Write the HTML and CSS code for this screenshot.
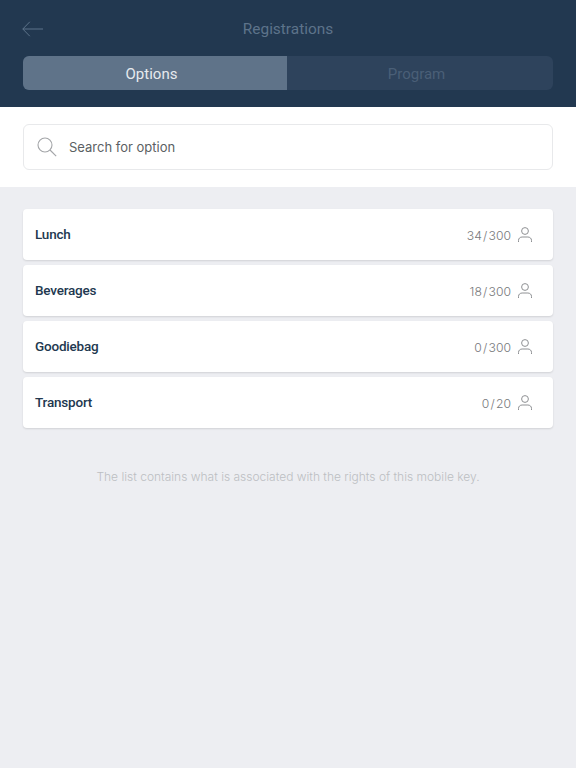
FILE: index.html
```html
<!DOCTYPE html>
<html lang="en">

<head>
    <meta charset="UTF-8">
    <meta name="viewport" content="width=device-width, initial-scale=1.0">
    <title>Registrations</title>
    <link rel="stylesheet" href="styles.css">
</head>

<body>

    <header class="topo">
        <div class="topo-linha">
            <a class="voltar" href="#" aria-label="Back">
                <svg width="22" height="16" viewBox="0 0 22 16" fill="none" stroke="#5d738a" stroke-width="1">
                    <path d="M21 8H0.8M7.8 0.8L0.8 8l7 7.2" />
                </svg>
            </a>
            <h1 class="titulo">Registrations</h1>
        </div>
        <div class="abas">
            <div class="aba aba-ativa">Options</div>
            <div class="aba">Program</div>
        </div>
    </header>

    <div class="busca">
        <div class="busca-campo">
            <svg width="20" height="20" viewBox="0 0 20 20" fill="none" stroke="#a3a5a8" stroke-width="1.1">
                <circle cx="8" cy="8" r="7" />
                <path d="M13 13l6.2 6.2" />
            </svg>
            <span>Search for option</span>
        </div>
    </div>

    <main class="lista">
        <div class="item">
            <span class="item-nome">Lunch</span>
            <span class="item-total">34 / 300</span>
            <svg class="pessoa" width="14" height="15" viewBox="0 0 14 15" fill="none" stroke="#8f9194" stroke-width="1">
                <circle cx="7" cy="4" r="3.4" />
                <path d="M0.5 15v-1.6c0-2 1.6-3.4 3.6-3.4h5.8c2 0 3.6 1.4 3.6 3.4V15" />
            </svg>
        </div>
        <div class="item">
            <span class="item-nome">Beverages</span>
            <span class="item-total">18 / 300</span>
            <svg class="pessoa" width="14" height="15" viewBox="0 0 14 15" fill="none" stroke="#8f9194" stroke-width="1">
                <circle cx="7" cy="4" r="3.4" />
                <path d="M0.5 15v-1.6c0-2 1.6-3.4 3.6-3.4h5.8c2 0 3.6 1.4 3.6 3.4V15" />
            </svg>
        </div>
        <div class="item">
            <span class="item-nome">Goodiebag</span>
            <span class="item-total">0 / 300</span>
            <svg class="pessoa" width="14" height="15" viewBox="0 0 14 15" fill="none" stroke="#8f9194" stroke-width="1">
                <circle cx="7" cy="4" r="3.4" />
                <path d="M0.5 15v-1.6c0-2 1.6-3.4 3.6-3.4h5.8c2 0 3.6 1.4 3.6 3.4V15" />
            </svg>
        </div>
        <div class="item">
            <span class="item-nome">Transport</span>
            <span class="item-total">0 / 20</span>
            <svg class="pessoa" width="14" height="15" viewBox="0 0 14 15" fill="none" stroke="#8f9194" stroke-width="1">
                <circle cx="7" cy="4" r="3.4" />
                <path d="M0.5 15v-1.6c0-2 1.6-3.4 3.6-3.4h5.8c2 0 3.6 1.4 3.6 3.4V15" />
            </svg>
        </div>

        <p class="aviso">The list contains what is associated with the rights of this mobile key.</p>
    </main>

</body>

</html>
```

FILE: styles.css
```css
body {
    font-family: "Inter", sans-serif;
    margin: 0;
    padding: 0;
    min-height: 768px;
    background-color: #edeef2;
}

.topo {
    background-color: #223850;
    height: 107px;
    box-sizing: border-box;
    padding: 0 23px;
}

.topo-linha {
    display: flex;
    justify-content: center;
    align-items: center;
    height: 56px;
    position: relative;
}

.voltar {
    position: absolute;
    left: -1px;
    top: 21px;
    line-height: 0;
}

.titulo {
    margin: 2px 0 0;
    font-family: "Roboto", sans-serif;
    font-size: 15.4px;
    font-weight: 400;
    color: #5d738a;
}

.abas {
    display: flex;
    height: 34px;
    border-radius: 6px;
    overflow: hidden;
    background-color: #2e435c;
}

.aba {
    flex: 1;
    display: flex;
    justify-content: center;
    align-items: center;
    padding: 1px 7px 0 0;
    font-family: "Roboto", sans-serif;
    font-size: 15px;
    color: #4a5f77;
}

.aba-ativa {
    flex: 0 0 264px;
    box-sizing: border-box;
    background-color: #5f7389;
    color: #e6eaee;
}

.busca {
    background-color: white;
    height: 80px;
    box-sizing: border-box;
    padding: 17px 23px 0;
}

.busca-campo {
    display: flex;
    align-items: center;
    gap: 12px;
    height: 46px;
    box-sizing: border-box;
    padding: 0 13px 0 13px;
    border: 1px solid #e8e9eb;
    border-radius: 6px;
    font-size: 13px;
    color: #5b5f63;
}

.lista {
    display: flex;
    flex-direction: column;
    gap: 5px;
    padding: 22px 23px 0;
}

.item {
    display: flex;
    align-items: center;
    height: 51px;
    box-sizing: border-box;
    padding: 0 21px 0 12px;
    background-color: white;
    border-radius: 4px;
    box-shadow: 0 1px 2px rgba(0, 0, 0, 0.12);
}

.item-nome {
    flex: 1;
    padding-bottom: 1px;
    font-family: "Roboto", sans-serif;
    font-size: 13.5px;
    font-weight: 500;
    letter-spacing: -0.2px;
    color: #22384f;
}

.item-total {
    padding-top: 1px;
    font-size: 12.2px;
    font-weight: 300;
    word-spacing: -2.2px;
    color: #77797c;
}

.pessoa {
    margin-left: 7px;
}

.aviso {
    margin: 36px 0 0;
    text-align: center;
    font-size: 12px;
    font-weight: 300;
    color: #bcbec2;
}
```
